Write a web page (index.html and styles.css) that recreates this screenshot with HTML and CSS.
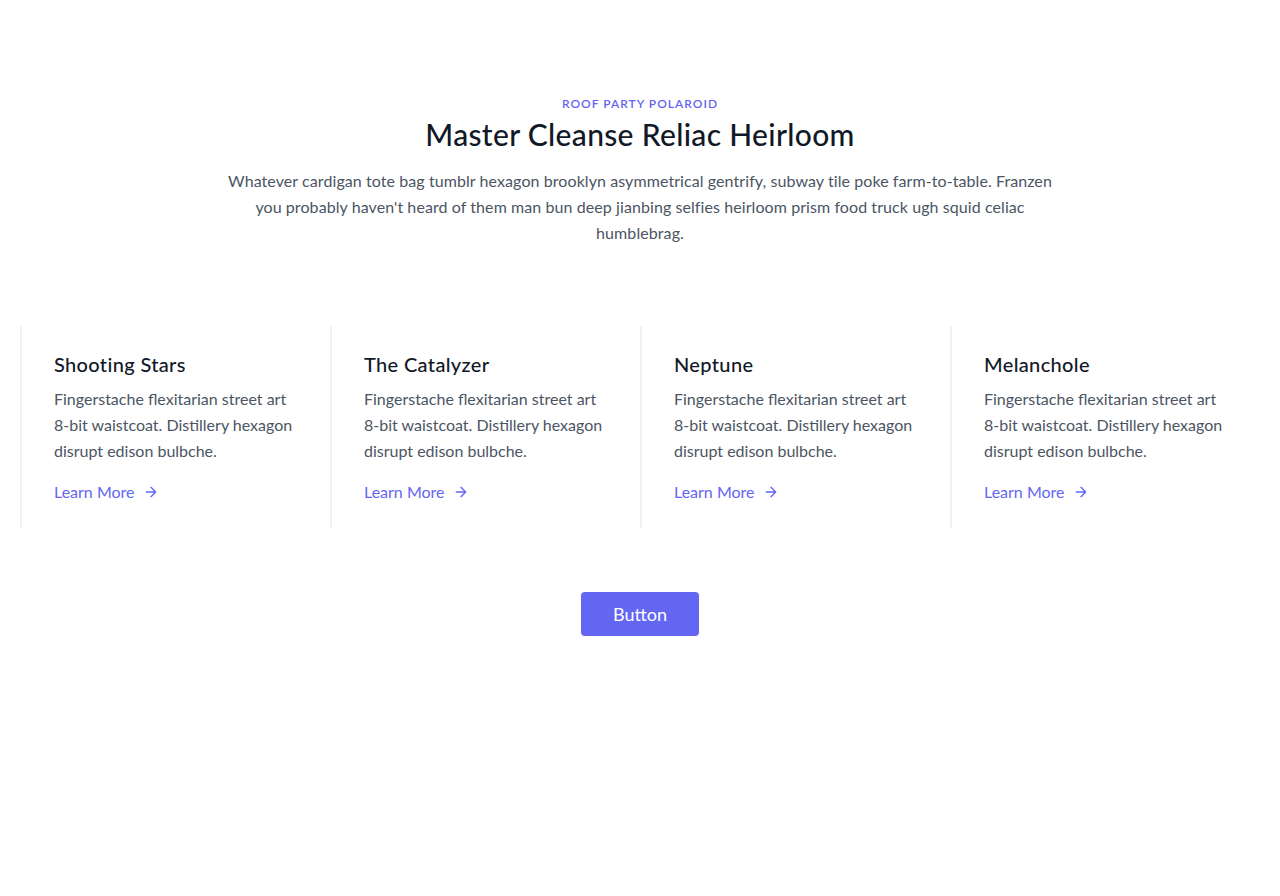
FILE: index.html
```html
<!DOCTYPE html>
<html lang="en">
<head>
<meta charset="utf-8">
<title>Features</title>
<link rel="stylesheet" href="styles.css">
</head>
<body>
<section class="section">
  <div class="container">
    <div class="intro">
      <h2 class="eyebrow">ROOF PARTY POLAROID</h2>
      <h1 class="title">Master Cleanse Reliac Heirloom</h1>
      <p class="lead">Whatever cardigan tote bag tumblr hexagon brooklyn asymmetrical gentrify, subway tile poke farm-to-table. Franzen you probably haven't heard of them man bun deep jianbing selfies heirloom prism food truck ugh squid celiac humblebrag.</p>
    </div>
    <div class="cards">
      <div class="card">
        <h2 class="card-title">Shooting Stars</h2>
        <p class="card-text">Fingerstache flexitarian street art 8-bit waistcoat. Distillery hexagon disrupt edison bulbche.</p>
        <a class="more" href="#">Learn More
          <svg class="arrow" viewBox="0 0 24 24" fill="none" stroke="currentColor" stroke-linecap="round" stroke-linejoin="round" stroke-width="2"><path d="M5 12h14M12 5l7 7-7 7"/></svg>
        </a>
      </div>
      <div class="card">
        <h2 class="card-title">The Catalyzer</h2>
        <p class="card-text">Fingerstache flexitarian street art 8-bit waistcoat. Distillery hexagon disrupt edison bulbche.</p>
        <a class="more" href="#">Learn More
          <svg class="arrow" viewBox="0 0 24 24" fill="none" stroke="currentColor" stroke-linecap="round" stroke-linejoin="round" stroke-width="2"><path d="M5 12h14M12 5l7 7-7 7"/></svg>
        </a>
      </div>
      <div class="card">
        <h2 class="card-title">Neptune</h2>
        <p class="card-text">Fingerstache flexitarian street art 8-bit waistcoat. Distillery hexagon disrupt edison bulbche.</p>
        <a class="more" href="#">Learn More
          <svg class="arrow" viewBox="0 0 24 24" fill="none" stroke="currentColor" stroke-linecap="round" stroke-linejoin="round" stroke-width="2"><path d="M5 12h14M12 5l7 7-7 7"/></svg>
        </a>
      </div>
      <div class="card">
        <h2 class="card-title">Melanchole</h2>
        <p class="card-text">Fingerstache flexitarian street art 8-bit waistcoat. Distillery hexagon disrupt edison bulbche.</p>
        <a class="more" href="#">Learn More
          <svg class="arrow" viewBox="0 0 24 24" fill="none" stroke="currentColor" stroke-linecap="round" stroke-linejoin="round" stroke-width="2"><path d="M5 12h14M12 5l7 7-7 7"/></svg>
        </a>
      </div>
    </div>
    <button class="btn" type="button">Button</button>
  </div>
</section>
</body>
</html>
```
FILE: styles.css
```css
* { box-sizing: border-box; }
html, body { margin: 0; padding: 0; background: #fff; }
body {
  font-family: "Segoe UI", Lato, "Liberation Sans", sans-serif;
  color: #4b5563;
}
.container {
  max-width: 1280px;
  margin: 0 auto;
  padding: 96px 20px;
  display: flex;
  flex-direction: column;
}
.intro {
  text-align: center;
  margin-bottom: 80px;
}
.eyebrow {
  margin: 0 0 4px;
  font-size: 12px;
  line-height: 16px;
  font-weight: 600;
  letter-spacing: 1px;
  color: #6366f1;
}
.title {
  margin: 0 0 16px;
  font-size: 30px;
  line-height: 36px;
  font-weight: 500;
  letter-spacing: 0.33px;
  color: #111827;
}
.lead {
  margin: 0 auto;
  max-width: 850px;
  font-size: 16px;
  line-height: 26px;
  letter-spacing: 0.08px;
}
.cards {
  display: flex;
}
.card {
  width: 25%;
  padding: 24px 32px;
  border-left: 2px solid rgba(229, 231, 235, 0.6);
}
.card-title {
  margin: 0 0 8px;
  font-size: 20px;
  line-height: 28px;
  font-weight: 500;
  letter-spacing: 0.35px;
  color: #111827;
}
.card-text {
  margin: 0 0 16px;
  font-size: 16px;
  line-height: 26px;
}
.more {
  display: inline-flex;
  align-items: center;
  color: #6366f1;
  text-decoration: none;
  font-size: 16px;
  line-height: 24px;
}
.arrow {
  width: 16px;
  height: 16px;
  margin-left: 8px;
}
.btn {
  margin: 64px auto 0;
  padding: 8px 32px;
  border: 0;
  border-radius: 4px;
  background: #6366f1;
  color: #fff;
  font-family: inherit;
  font-size: 18px;
  line-height: 28px;
}
```
